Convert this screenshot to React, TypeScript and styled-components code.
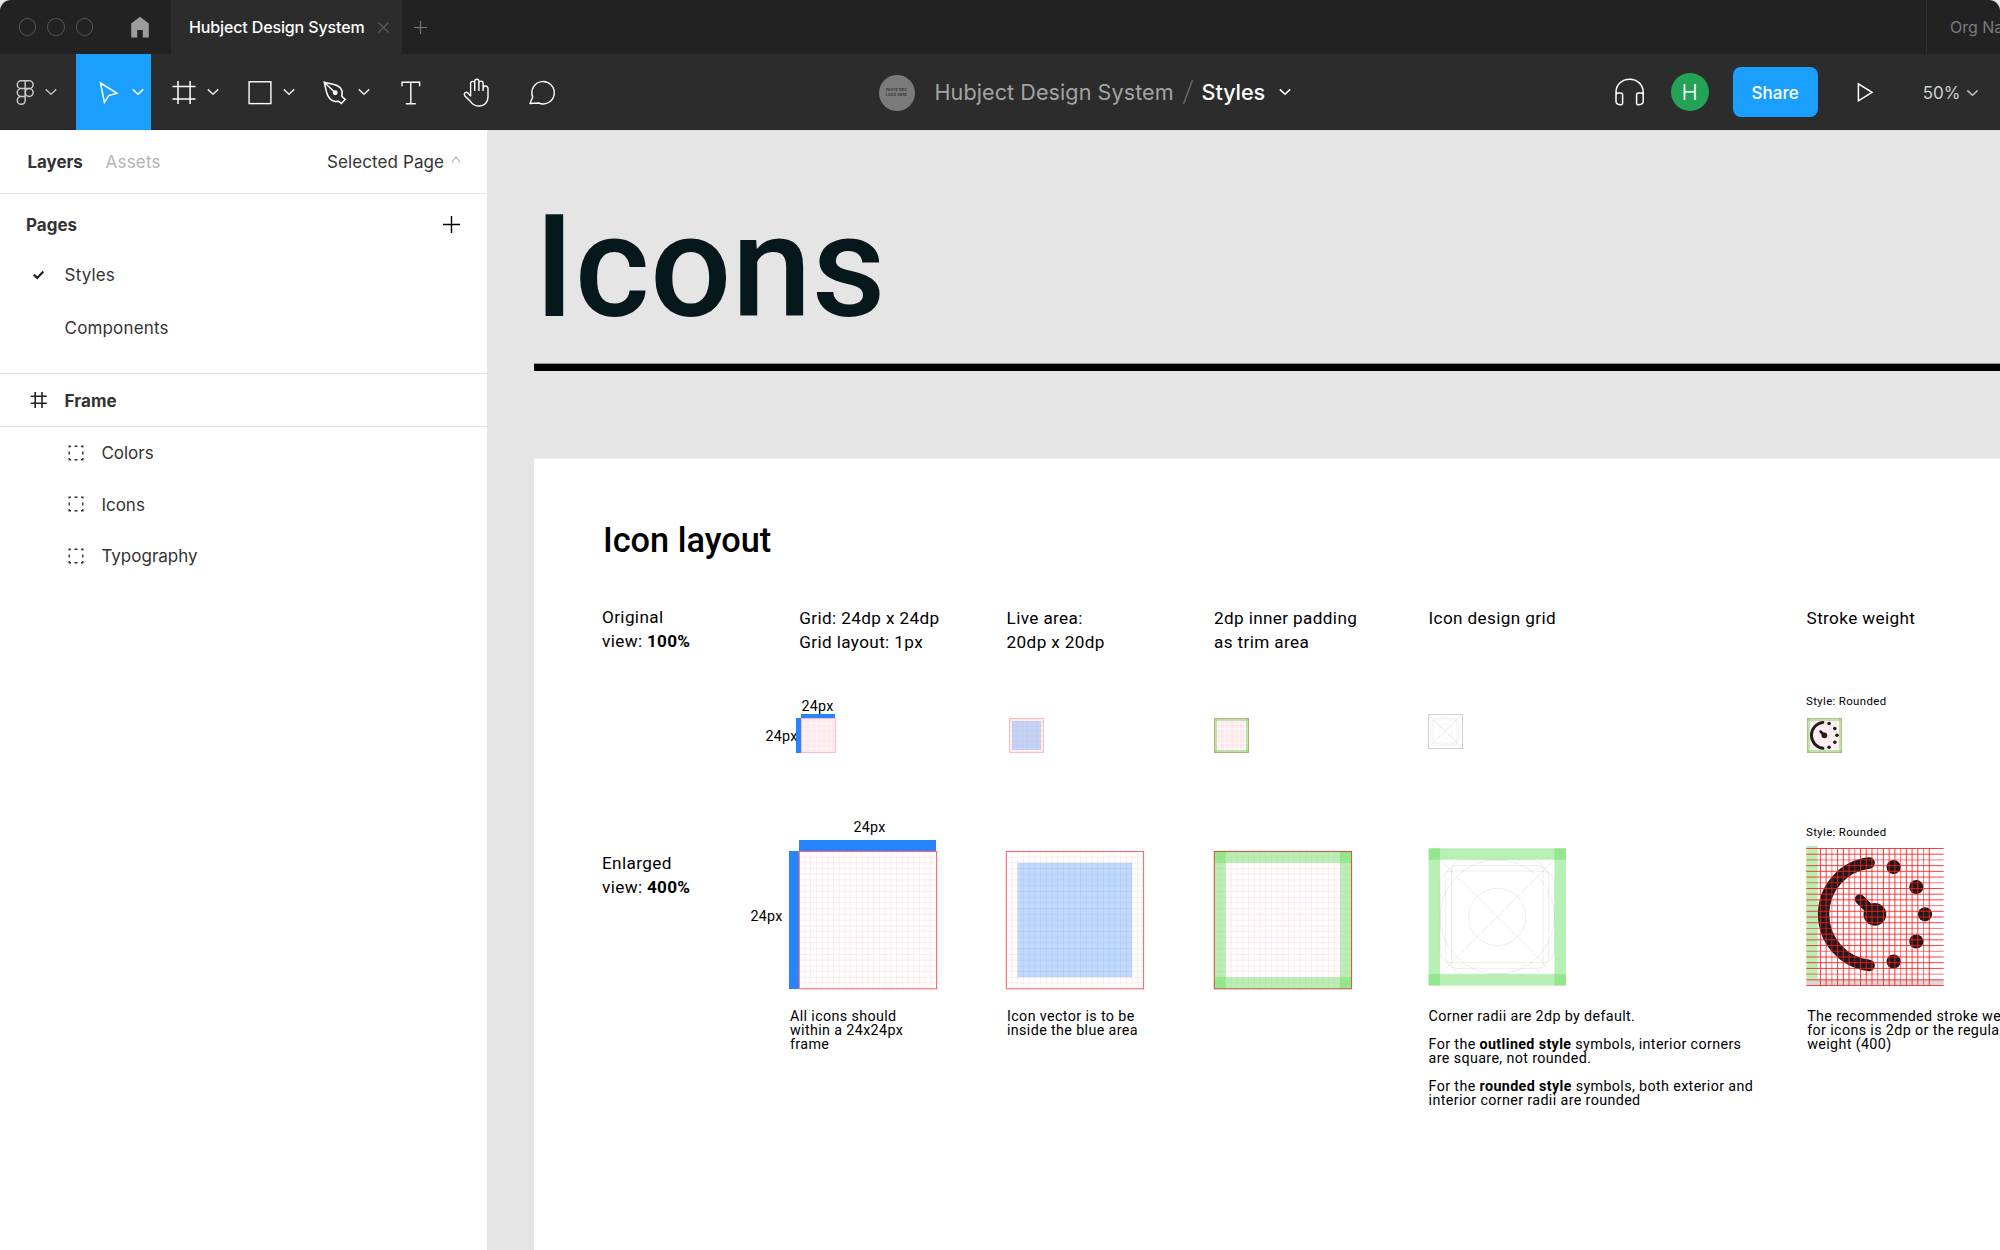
import React from "react";
import styled, { createGlobalStyle } from "styled-components";

const Global = createGlobalStyle`
  * { box-sizing: border-box; }
  html, body { margin: 0; padding: 0; }
  body { width: 2000px; height: 1250px; overflow: hidden; background: #e5e5e5; }
  svg { display: block; flex: none; }
`;

const Shell = styled.div`
  width: 2000px;
  height: 1250px;
  display: flex;
  flex-direction: column;
  overflow: hidden;
  background: #e5e5e5;
  font-family: Inter, "Liberation Sans", sans-serif;
`;

/* ---------- title bar ---------- */

const TitleBar = styled.div`
  height: 54px;
  flex: none;
  display: flex;
  background: #222222;
  border-radius: 11px 11px 0 0;
  overflow: hidden;
`;
const WindowControls = styled.div`
  width: 171px;
  display: flex;
  align-items: center;
  padding-left: 18.5px;
  gap: 11px;
`;
const Light = styled.span`
  width: 17.5px;
  height: 17.5px;
  border-radius: 50%;
  border: 1.4px solid #575757;
`;
const HomeSlot = styled.span`
  margin-left: 26px;
`;
const Tab = styled.div`
  width: 231px;
  display: flex;
  align-items: center;
  padding-left: 18px;
  background: #2c2c2c;
  color: #fff;
`;
const TabLabel = styled.span`
  width: 189px;
  font-size: 16px;
  font-weight: 500;
  line-height: 20px;
  letter-spacing: -0.13px;
  white-space: nowrap;
`;
const NewTab = styled.div`
  flex: 1;
  display: flex;
  align-items: center;
  padding-left: 12px;
`;
const OrgName = styled.div`
  width: 74px;
  padding-left: 23px;
  border-left: 1px solid #2f2f2f;
  display: flex;
  align-items: center;
  white-space: nowrap;
  font-size: 16px;
  line-height: 20px;
  color: #7b7b7b;
`;

/* ---------- toolbar ---------- */

const Toolbar = styled.div`
  height: 76px;
  flex: none;
  display: flex;
  background: #2c2c2c;
  border-bottom: 1px solid #29222a;
`;
const Tool = styled.div<{ $active?: boolean; $w?: number; $pad?: number; $gap?: number }>`
  width: ${(p) => p.$w ?? 75.5}px;
  height: 76px;
  padding-left: ${(p) => p.$pad ?? 18}px;
  display: flex;
  align-items: center;
  gap: ${(p) => p.$gap ?? 8}px;
  background: ${(p) => (p.$active ? "#1a9fff" : "transparent")};
`;
const FileInfo = styled.div`
  display: flex;
  align-items: center;
  height: 75px;
  margin-left: 301px;
  white-space: nowrap;
`;
const OrgLogo = styled.div`
  width: 36px;
  height: 36px;
  margin-top: 2px;
  border-radius: 50%;
  background: #7a7a7a;
  display: flex;
  align-items: center;
  justify-content: center;
  text-align: center;
  font-size: 3.2px;
  line-height: 4.4px;
  font-weight: 700;
  letter-spacing: 0.35px;
  color: #333;
`;
const FileName = styled.span`
  width: 248px;
  margin-left: 20px;
  font-size: 21.6px;
  line-height: 26px;
  letter-spacing: 0.06px;
  color: #a3a3a3;
`;
const PageName = styled.span`
  width: 77px;
  margin-left: 9px;
  font-size: 21.6px;
  line-height: 26px;
  font-weight: 500;
  letter-spacing: -0.05px;
  color: #fff;
`;
const Actions = styled.div`
  margin-left: auto;
  width: 388px;
  height: 76px;
  display: flex;
  align-items: center;
`;
const Avatar = styled.div`
  width: 38px;
  height: 38px;
  margin-left: 24.6px;
  border-radius: 50%;
  background: #22a355;
  color: #fff;
  font-size: 22px;
  font-weight: 300;
  line-height: 38px;
  text-align: center;
`;
const ShareButton = styled.button`
  width: 85px;
  height: 50px;
  margin-left: 24px;
  padding: 2px 0 0;
  border: 0;
  border-radius: 8px;
  background: #1a9fff;
  color: #fff;
  font: 500 17px Inter, sans-serif;
`;
const PlaySlot = styled.span`
  margin-left: 37.6px;
`;
const Zoom = styled.div`
  margin-left: 47.6px;
  padding-top: 1px;
  display: flex;
  align-items: center;
  gap: 8px;
  font-size: 17px;
  color: #d0d0d0;
`;
const ZoomValue = styled.span`
  width: 35px;
`;

/* ---------- side panel ---------- */

const Main = styled.div`
  flex: 1;
  min-height: 0;
  display: flex;
`;
const Side = styled.aside`
  width: 487px;
  flex: none;
  background: #fff;
  color: #333;
  font-size: 17px;
`;
const PanelTabs = styled.div`
  height: 64px;
  display: flex;
  align-items: center;
  padding: 0 26px 0 27.6px;
  border-bottom: 1px solid #e2e2e2;
`;
const PanelTab = styled.span<{ $muted?: boolean }>`
  width: ${(p) => (p.$muted ? 221.4 : 78)}px;
  font-weight: ${(p) => (p.$muted ? 400 : 700)};
  color: ${(p) => (p.$muted ? "#b3b3b3" : "#333")};
  letter-spacing: ${(p) => (p.$muted ? 0.2 : -0.1)}px;
`;
const PageSelect = styled.span`
  width: 124px;
  white-space: nowrap;
  letter-spacing: 0.1px;
`;
const Pages = styled.div`
  height: 180px;
  padding-top: 4px;
  border-bottom: 1px solid #e2e2e2;
`;
const PagesHead = styled.div`
  height: 54px;
  display: flex;
  align-items: center;
  justify-content: space-between;
  padding: 0 27px 0 26px;
  font-weight: 700;
  svg { margin-bottom: 1px; }
`;
const Row = styled.div<{ $h: number; $bold?: boolean; $line?: boolean; $indent?: number; $gap?: number; $ls?: number }>`
  height: ${(p) => p.$h}px;
  display: flex;
  align-items: center;
  padding-left: ${(p) => p.$indent ?? 30}px;
  gap: ${(p) => p.$gap ?? 16.6}px;
  font-weight: ${(p) => (p.$bold ? 700 : 400)};
  letter-spacing: ${(p) => p.$ls ?? 0.15}px;
  border-bottom: ${(p) => (p.$line ? "1px solid #e2e2e2" : "0")};
`;
const RowLabel = styled.span`
  padding-top: 1px;
`;
const IconSlot = styled.span`
  width: 18px;
  height: 18px;
  flex: none;
`;

/* ---------- canvas ---------- */

const Canvas = styled.main`
  flex: 1;
  min-width: 0;
  padding: 52px 0 0 47px;
  background: #e5e5e5;
  color: #000;
  font-family: Roboto, "Liberation Sans", sans-serif;
  overflow: hidden;
  display: flex;
  flex-direction: column;
`;
const Heading = styled.h1`
  margin: 0 0 11px;
  height: 170px;
  flex: none;
  font-size: 143.6px;
  font-weight: 500;
  line-height: 171px;
  letter-spacing: 0.2px;
  color: #06181b;
  white-space: nowrap;
`;
const Rule = styled.div`
  height: 8px;
  flex: none;
  background: #000;
  border-top: 1px solid #8f9897;
  margin-bottom: 87px;
`;
const Sheet = styled.section`
  flex: 1;
  min-height: 0;
  background: #fff;
  border-top: 1px solid #f0f0f0;
  padding: 61px 0 0 68px;
  overflow: hidden;
`;
const SheetTitle = styled.h2`
  margin: 0 0 46px 1px;
  height: 40px;
  font-size: 34.3px;
  font-weight: 500;
  line-height: 40px;
  white-space: nowrap;
`;
const Grid = styled.div<{ $cols: string; $h: number; $mb: number }>`
  display: grid;
  grid-template-columns: ${(p) => p.$cols};
  height: ${(p) => p.$h}px;
  margin-bottom: ${(p) => p.$mb}px;
`;
const Cell = styled.div<{ $top?: number; $left?: number }>`
  padding: ${(p) => p.$top ?? 0}px 0 0 ${(p) => p.$left ?? 0}px;
`;
const Term = styled.div<{ $raise?: boolean }>`
  margin-top: ${(p) => (p.$raise ? -1 : 0)}px;
  font-size: 17.15px;
  line-height: 24px;
  letter-spacing: 0.37px;
  white-space: nowrap;
  b { font-weight: 700; letter-spacing: 0.2px; }
`;
const Caption = styled.div`
  font-size: 14.3px;
  line-height: 14px;
  letter-spacing: 0.37px;
  white-space: nowrap;
  p { margin: 0 0 14px; }
  b { font-weight: 700; }
`;
const Dim = styled.div<{ $center?: boolean; $lift?: number }>`
  padding-left: ${(p) => (p.$center ? 3 : 0.6)}px;
  padding-bottom: ${(p) => p.$lift ?? 0}px;
  font-size: 14.3px;
  line-height: 14px;
  letter-spacing: 0.2px;
  text-align: ${(p) => (p.$center ? "center" : "left")};
  white-space: nowrap;
`;
const StyleLabel = styled.div<{ $mb: number }>`
  margin-bottom: ${(p) => p.$mb}px;
  font-size: 11.4px;
  line-height: 14px;
  letter-spacing: 0.37px;
  white-space: nowrap;
`;
const Measured = styled.div<{ $label: number; $side: number; $barH: number }>`
  display: grid;
  grid-template-columns: ${(p) => p.$label}px ${(p) => p.$side}px auto;
  grid-template-rows: auto ${(p) => p.$barH}px auto;
  justify-content: start;
`;
const DimTop = styled.div<{ $pb: number }>`
  grid-column: 3;
  grid-row: 1;
  padding-bottom: ${(p) => p.$pb}px;
`;
const DimLeft = styled.div`
  grid-column: 1;
  grid-row: 3;
  align-self: center;
`;
const BarTop = styled.div`
  grid-column: 3;
  grid-row: 2;
  margin-right: 1px;
  background: #2684ff;
`;
const BarLeft = styled.div`
  grid-column: 2;
  grid-row: 3;
  background: #2684ff;
`;
const Art = styled.div`
  grid-column: 3;
  grid-row: 3;
`;

/* ---------- icons ---------- */

type Stroke = { color?: string; w?: number };

const Chevron = ({ color = "#e6e6e6", width = 12 }: { color?: string; width?: number }) => (
  <svg width={width} height="8" viewBox="0 0 12 8" fill="none" stroke={color} strokeWidth="1.5">
    <path d="M0.8 1.4 6 6.2l5.2-4.8" />
  </svg>
);

const ToolIcon = ({ children, color = "#fff", w = 1.4 }: React.PropsWithChildren<Stroke>) => (
  <svg width="30" height="30" viewBox="0 0 30 30" fill="none" stroke={color} strokeWidth={w}>
    {children}
  </svg>
);

const DottedFrame = () => (
  <svg width="16" height="16" viewBox="0 0 16 16" stroke="#333" strokeWidth="1.4" fill="none">
    <path d="M0.5 1.2H3M6.5 1.2h3M13 1.2h2.5M0.5 14.8H3M6.5 14.8h3M13 14.8h2.5M1.2 0.5v2M1.2 6.5v3M1.2 13v2.5M14.8 0.5v2M14.8 6.5v3M14.8 13v2.5" />
  </svg>
);

/* ---------- diagrams ---------- */

const U = 5.72;
const S = U * 24;
const steps = (n: number) => Array.from({ length: n }, (_, i) => i);

const GridLines = ({ color }: { color: string }) => (
  <g stroke={color} strokeWidth="1">
    {steps(23).map((i) => (
      <path key={i} d={`M${(i + 1) * U} 0V${S}M0 ${(i + 1) * U}H${S}`} />
    ))}
  </g>
);

const Trim = ({ size }: { size: number }) => {
  const b = size / 12;
  return (
    <g fill="#71e06a" fillOpacity="0.5">
      <rect width={size} height={b} />
      <rect y={size - b} width={size} height={b} />
      <rect width={b} height={size} />
      <rect x={size - b} width={b} height={size} />
    </g>
  );
};

const LargeGrid = ({ kind }: { kind: "plain" | "live" | "trim" }) => (
  <svg width="138" height="138" viewBox="-0.2 -0.4 138 138" fill="none" overflow="visible">
    <GridLines color="rgba(255,40,40,0.085)" />
    {kind === "live" && <rect x={U * 2} y={U * 2} width={U * 20} height={U * 20} fill="#2684ff" fillOpacity="0.3" />}
    {kind === "trim" && <Trim size={S} />}
    <rect x="0.1" y="0.1" width={S} height={S} stroke={kind === "trim" ? "#d3593c" : "#ff6a6a"} strokeWidth="1.1" />
  </svg>
);

const SmallMesh = () => (
  <>
    <rect x="0.5" y="0.5" width="34" height="34" fill="#ffe9eb" />
    <path
      d="M5.5 0v35M10.5 0v35M15.5 0v35M20.5 0v35M25.5 0v35M30.5 0v35M0 5.5h35M0 10.5h35M0 15.5h35M0 20.5h35M0 25.5h35M0 30.5h35"
      stroke="#fff"
      strokeOpacity="0.5"
    />
  </>
);

const SmallGrid = ({ kind }: { kind: "plain" | "live" | "trim" }) => (
  <svg width="35" height="35" viewBox="0 0 35 35" fill="none" overflow="visible">
    <SmallMesh />
    {kind === "live" && <rect x="3" y="3" width="29" height="29" fill="#2684ff" fillOpacity="0.28" />}
    <rect x="0.5" y="0.5" width="34" height="34" stroke="#ffbcbf" />
    {kind === "trim" && <Trim size={35} />}
    {kind === "trim" && <rect x="0.5" y="0.5" width="34" height="34" stroke="#b9955f" strokeOpacity="0.55" />}
  </svg>
);

const Keylines = ({ color, w }: { color: string; w: number }) => (
  <g stroke={color} strokeWidth={w} fill="none">
    <path d={`M0 0 ${S} ${S}M${S} 0 0 ${S}`} />
    <circle cx={S / 2} cy={S / 2} r={U * 10} />
    <circle cx={S / 2} cy={S / 2} r={U * 5} />
    <rect x={U * 3} y={U * 3} width={U * 18} height={U * 18} rx={U * 2} />
    <rect x={U * 4} y={U * 2} width={U * 16} height={U * 20} rx={U * 2} />
    <rect x={U * 2} y={U * 4} width={U * 20} height={U * 16} rx={U * 2} />
  </g>
);

const Gauge = () => (
  <g>
    <path d="M63.2 17.4A51.6 51.6 0 0 0 63.2 119.9" fill="none" stroke="#1f1a1e" strokeWidth="11.4" strokeLinecap="round" />
    <path d="M53.8 53.6 68.9 68.6" stroke="#1f1a1e" strokeWidth="10" strokeLinecap="round" />
    <g fill="#1f1a1e">
      <circle cx="68.9" cy="68.7" r="11.4" />
      <circle cx="87.6" cy="21.5" r="7.1" />
      <circle cx="110.3" cy="41.5" r="7.1" />
      <circle cx="119" cy="68.7" r="7.1" />
      <circle cx="110.3" cy="95.9" r="7.1" />
      <circle cx="87.6" cy="115.9" r="7.1" />
    </g>
  </g>
);

const LargeGauge = () => (
  <svg width="138" height="140" viewBox="0 0 138 140" overflow="visible">
    <rect x="0.3" y="0" width="11.4" height="134.5" fill="#b8f0b4" />
    <rect x="0.3" y="133.5" width="137.4" height="6" fill="#d9d9d9" />
    <g transform="translate(0 -0.4)">
      <Gauge />
    </g>
    <g stroke="#ff1a1a" strokeWidth="1">
      {steps(25).map((i) => (
        <path key={i} d={`M0.3 ${2.5 + i * 5.71}H137.7`} strokeOpacity={i % 4 === 2 ? 0.6 : 0.85} />
      ))}
      {steps(20).map((i) => (
        <path key={i} d={`M${14.4 + i * 5.73} 2V139.5`} strokeOpacity={i % 4 === 2 ? 0.6 : 0.85} />
      ))}
    </g>
  </svg>
);

/* ---------- page ---------- */

export default function App() {
  return (
    <>
      <Global />
      <Shell>
        <TitleBar>
          <WindowControls>
            <Light />
            <Light />
            <Light />
            <HomeSlot>
              <svg width="20" height="22" viewBox="0 0 20 22" fill="#9c9c9c">
                <path d="M10 0.8 18.8 7.6V21.6H12.8V14H7.2V21.6H1.2V7.6Z" />
              </svg>
            </HomeSlot>
          </WindowControls>
          <Tab>
            <TabLabel>Hubject Design System</TabLabel>
            <svg width="11" height="11" viewBox="0 0 11 11" stroke="#5c5c5c" strokeWidth="1.2">
              <path d="M0.5 0.5l10 10M10.5 0.5l-10 10" />
            </svg>
          </Tab>
          <NewTab>
            <svg width="13" height="13" viewBox="0 0 13 13" stroke="#777" strokeWidth="1.2">
              <path d="M6.5 0v13M0 6.5h13" />
            </svg>
          </NewTab>
          <OrgName>Org Name</OrgName>
        </TitleBar>

        <Toolbar>
          <Tool $w={75.5} $pad={10} $gap={4.5}>
            <ToolIcon color="#c9c9c9" w={1.5}>
              <path d="M15.2 3.8h-4a3.9 3.9 0 0 0 0 7.8h4zM15.2 3.8h4a3.9 3.9 0 0 1 0 7.8h-4zM15.2 11.6h-4a3.9 3.9 0 0 0 0 7.8h4zM15.2 19.4h-4a3.95 3.95 0 1 0 4 3.9z" />
              <circle cx="19.2" cy="15.5" r="3.9" />
            </ToolIcon>
            <Chevron color="#b8b8b8" />
          </Tool>
          <Tool $active>
            <ToolIcon w={1.5}>
              <path d="M6.5 6 23 16.3 14.8 18.6 10.4 25.4Z" />
            </ToolIcon>
            <Chevron color="#fff" />
          </Tool>
          <Tool>
            <ToolIcon w={1.5}>
              <path d="M9 4v23M21.1 4v23M3.5 9.4h23M3.5 22.1h23" />
            </ToolIcon>
            <Chevron />
          </Tool>
          <Tool>
            <ToolIcon w={1.4}>
              <rect x="4.1" y="4.8" width="21.8" height="21.8" />
            </ToolIcon>
            <Chevron />
          </Tool>
          <Tool>
            <ToolIcon w={1.5}>
              <path d="M4.2 5.3 14 7.4C19 8.6 22 12 22.2 15.6L21.8 19.2 25.2 22.4 21.4 26.4 18.4 24.2 15.2 24.4C10.5 23.6 7.8 20 6.6 15.2ZM4.2 5.3 15.2 15.8" />
              <circle cx="15.2" cy="15.8" r="1.7" fill="#fff" />
            </ToolIcon>
            <Chevron />
          </Tool>
          <Tool $w={65}>
            <ToolIcon w={1.4}>
              <path d="M6 9.2V5.2H23.6V9.2M14.8 5.2V26.8M9.8 26.8h10" />
            </ToolIcon>
          </Tool>
          <Tool $w={66}>
            <ToolIcon w={1.4}>
              <path d="M9.6 19.4V6.4a2.05 2.05 0 0 1 4.1 0V4.3a2.1 2.1 0 0 1 4.2 0V6.2a2.1 2.1 0 0 1 4.2 0V11.4a2.2 2.2 0 0 1 4.9 0V20c0 5.4-3.6 9-8.8 9-3.8 0-6.4-1.4-8.4-4.2L3.7 18.8c-1.4-2.4 1.2-4.6 3.2-2.8L9.6 19M13.7 6V14M17.9 6V14M22.1 10V14" />
            </ToolIcon>
          </Tool>
          <Tool $w={69}>
            <ToolIcon w={1.4}>
              <path d="M3 26.5 5.7 20A11.2 11.2 0 1 1 11.6 26Z" strokeLinejoin="round" />
            </ToolIcon>
          </Tool>
          <FileInfo>
            <OrgLogo>
              PASTE ORG
              <br />
              LOGO HERE
            </OrgLogo>
            <FileName>Hubject Design System</FileName>
            <svg width="10" height="24" viewBox="0 0 10 24" stroke="#6b6b6b" strokeWidth="1.4">
              <path d="M9.5 0 0.5 24" />
            </svg>
            <PageName>Styles</PageName>
            <Chevron color="#fff" />
          </FileInfo>
          <Actions>
            <svg width="34" height="30" viewBox="0 0 34 30" fill="none" stroke="#fff" strokeWidth="1.5">
              <path d="M4 22.5V15.2C4 7.6 10 2.2 17.6 2.2S31.2 7.6 31.2 15.2V22.5M4 18.2C4 16.8 5 16 6.2 16H8.6C9.8 16 10.6 16.8 10.6 18V26C10.6 27.2 9.8 28 8.6 27.8L6 27.2C4.8 26.8 4 26 4 24.8ZM31.2 18.2C31.2 16.8 30.2 16 29 16H26.6C25.4 16 24.6 16.8 24.6 18V26C24.6 27.2 25.4 28 26.6 27.8L29.2 27.2C30.4 26.8 31.2 26 31.2 24.8Z" />
            </svg>
            <Avatar>H</Avatar>
            <ShareButton>Share</ShareButton>
            <PlaySlot>
              <svg width="20" height="20" viewBox="0 0 20 20" fill="none" stroke="#fff" strokeWidth="1.5">
                <path d="M3.4 1.8 17 10.3 3.4 18.8Z" />
              </svg>
            </PlaySlot>
            <Zoom>
              <ZoomValue>50%</ZoomValue>
              <Chevron color="#bdbdbd" width={13} />
            </Zoom>
          </Actions>
        </Toolbar>

        <Main>
          <Side>
            <PanelTabs>
              <PanelTab>Layers</PanelTab>
              <PanelTab $muted>Assets</PanelTab>
              <PageSelect>Selected Page</PageSelect>
              <svg width="10" height="12" viewBox="0 0 10 12" fill="none" stroke="#b3b3b3" strokeWidth="1.2">
                <path d="M0.7 6.5 5 1l4.3 5.5" />
              </svg>
            </PanelTabs>
            <Pages>
              <PagesHead>
                Pages
                <svg width="17" height="17" viewBox="0 0 17 17" stroke="#000" strokeWidth="1.4">
                  <path d="M8.5 0v17M0 8.5h17" />
                </svg>
              </PagesHead>
              <Row $h={46}>
                <IconSlot>
                  <svg width="18" height="18" viewBox="0 0 18 18" fill="none" stroke="#222" strokeWidth="2.2">
                    <path d="M3.8 8.6 7.2 11.9 13.4 5.4" />
                  </svg>
                </IconSlot>
                Styles
              </Row>
              <Row $h={60}>
                <IconSlot />
                Components
              </Row>
            </Pages>
            <Row $h={53} $bold $line $ls={0.05}>
              <IconSlot>
                <svg width="18" height="18" viewBox="0 0 18 18" stroke="#222" strokeWidth="1.6">
                  <path d="M5.2 1v16M12 1v16M0.8 5.3h16M0.8 12.3h16" />
                </svg>
              </IconSlot>
              <RowLabel>Frame</RowLabel>
            </Row>
            {["Colors", "Icons", "Typography"].map((name) => (
              <Row key={name} $h={51.5} $indent={68} $gap={17.4} $ls={0}>
                <DottedFrame />
                <RowLabel>{name}</RowLabel>
              </Row>
            ))}
          </Side>

          <Canvas>
            <Heading>Icons</Heading>
            <Rule />
            <Sheet>
              <SheetTitle>Icon layout</SheetTitle>

              <Grid $cols="197.3px 207.3px 207.4px 214.6px 378px 200px" $h={48} $mb={40}>
                <Term $raise>Original<br />view: <b>100%</b></Term>
                <Term>Grid: 24dp x 24dp<br />Grid layout: 1px</Term>
                <Term>Live area:<br />20dp x 20dp</Term>
                <Term>2dp inner padding<br />as trim area</Term>
                <Term>Icon design grid</Term>
                <Term>Stroke weight</Term>
              </Grid>

              <Grid $cols="163px 244px 205px 214px 378px 200px" $h={59} $mb={67}>
                <Cell />
                <Cell $top={5}>
                  <Measured $label={31} $side={5} $barH={4}>
                    <DimTop $pb={1}><Dim>24px</Dim></DimTop>
                    <BarTop />
                    <DimLeft><Dim>24px</Dim></DimLeft>
                    <BarLeft />
                    <Art><SmallGrid kind="plain" /></Art>
                  </Measured>
                </Cell>
                <Cell $top={24}><SmallGrid kind="live" /></Cell>
                <Cell $top={24}><SmallGrid kind="trim" /></Cell>
                <Cell $top={20}>
                  <svg width="35" height="35" viewBox={`-1 -1 ${S + 4} ${S + 4}`}>
                    <Keylines color="#eceeee" w={2} />
                    <path d={`M0 0 ${S} ${S}M${S} 0 0 ${S}`} stroke="#dcdfdf" strokeWidth="2" />
                    <rect x="1" y="1" width={S} height={S} fill="none" stroke="#cdd1d1" strokeWidth="4" />
                  </svg>
                </Cell>
                <Cell>
                  <StyleLabel $mb={10}>Style: Rounded</StyleLabel>
                  <svg width="36" height="35" viewBox="-1 0 36 35" overflow="visible">
                    <SmallMesh />
                    <Trim size={35} />
                    <rect x="0.5" y="0.5" width="34" height="34" fill="none" stroke="#c08a5f" strokeOpacity="0.5" />
                    <g transform="scale(0.252)"><Gauge /></g>
                  </svg>
                </Cell>
              </Grid>

              <Grid $cols="148px 256px 208px 214px 378px 200px" $h={169} $mb={20}>
                <Cell $top={32}>
                  <Term $raise>Enlarged<br />view: <b>400%</b></Term>
                </Cell>
                <Cell>
                  <Measured $label={39} $side={10} $barH={11}>
                    <DimTop $pb={6}><Dim $center>24px</Dim></DimTop>
                    <BarTop />
                    <DimLeft><Dim $lift={8}>24px</Dim></DimLeft>
                    <BarLeft />
                    <Art><LargeGrid kind="plain" /></Art>
                  </Measured>
                </Cell>
                <Cell $top={31}><LargeGrid kind="live" /></Cell>
                <Cell $top={31}><LargeGrid kind="trim" /></Cell>
                <Cell $top={28}>
                  <svg width="138" height="138" viewBox="-0.6 -0.3 138 138">
                    <Keylines color="rgba(0,0,0,0.07)" w={1} />
                    <Trim size={S} />
                  </svg>
                </Cell>
                <Cell $top={5}>
                  <StyleLabel $mb={7}>Style: Rounded</StyleLabel>
                  <LargeGauge />
                </Cell>
              </Grid>

              <Grid $cols="188px 217px 421.6px 378.6px 300px" $h={120} $mb={0}>
                <Cell />
                <Caption>All icons should<br />within a 24x24px<br />frame</Caption>
                <Caption>Icon vector is to be<br />inside the blue area</Caption>
                <Caption>
                  <p>Corner radii are 2dp by default.</p>
                  <p>For the <b>outlined style</b> symbols, interior corners<br />are square, not rounded.</p>
                  <p>For the <b>rounded style</b> symbols, both exterior and<br />interior corner radii are rounded</p>
                </Caption>
                <Caption>The recommended stroke weight<br />for icons is 2dp or the regular<br />weight (400)</Caption>
              </Grid>
            </Sheet>
          </Canvas>
        </Main>
      </Shell>
    </>
  );
}
